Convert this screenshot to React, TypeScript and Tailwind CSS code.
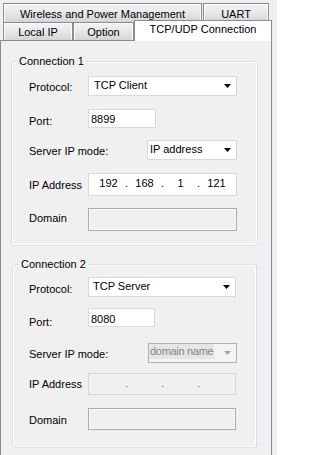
import React from 'react';

const Arrow: React.FC<{ disabled?: boolean }> = ({ disabled }) => (
  <span className="flex w-[17px] shrink-0 items-center justify-center">
    <svg width="7" height="4" viewBox="0 0 7 4">
      <path d="M0 0h7L3.5 4z" fill={disabled ? '#a6a6a6' : '#000'} />
    </svg>
  </span>
);

const Combo: React.FC<{ value: string; className: string }> = ({ value, className }) => (
  <div className={`flex h-full border border-[#d9d9d9] bg-white ${className}`}>
    <span className="flex-1 truncate pt-[2px]">{value}</span>
    <Arrow />
  </div>
);

const DisabledCombo: React.FC<{ value: string; className: string }> = ({ value, className }) => (
  <div className={`flex h-full border border-[#b1b1b1] bg-[#f3f3f3] ${className}`}>
    <div className="flex-1 overflow-hidden">
      <span className="inline-block h-[15px] whitespace-nowrap bg-[#e6e6e6] px-[1px] pt-[1px] tracking-[-0.3px] text-[#848484]">
        {value}
      </span>
    </div>
    <Arrow disabled />
  </div>
);

const TextBox: React.FC<{ value: string; className: string }> = ({ value, className }) => (
  <div className={`h-full border border-[#d9d9d9] bg-white pl-[2px] ${className}`}>{value}</div>
);

const IpBox: React.FC<{ parts?: string[]; className: string }> = ({ parts, className }) => {
  const fields = parts ?? ['', '', '', ''];
  return (
    <div
      className={`flex h-full border pl-[3px] pt-[3px] ${
        parts ? 'border-[#d9d9d9] bg-white text-black' : 'border-[#d6d6d6] bg-[#f0f0f0] text-[#6a6a6a]'
      } ${className}`}
    >
      {fields.map((p, i) => (
        <React.Fragment key={i}>
          <span className="w-[33px] text-center text-black">{p}</span>
          {i < 3 && <span className="w-[3px] text-center">.</span>}
        </React.Fragment>
      ))}
    </div>
  );
};

const DisabledBox: React.FC<{ className: string }> = ({ className }) => (
  <div className={`h-full border border-[#acacac] bg-[#f0f0f0] shadow-[inset_0_0_0_1px_#f9f9f9] ${className}`} />
);

const tabBase =
  'flex justify-center border-t border-l border-r border-[#898c95] bg-linear-to-b from-[#f3f3f3] via-[#e8e8e8] to-[#d4d4d4] shadow-[inset_1px_1px_0_#fbfbfb,inset_-1px_0_0_#fbfbfb]';

export default function App() {
  return (
    <div className="h-[455px] w-[277px] overflow-hidden bg-[#f0f0f0] pt-[3px] text-[11px] leading-[13px] text-black font-['Liberation_Sans',Arial,sans-serif]">
      {/* tab strip, back row */}
      <div className="flex h-[19px] pl-[3px]">
        <div className={`${tabBase} h-[19px] w-[199px] pt-[4px]`}>Wireless and Power Management</div>
        <div className={`${tabBase} ml-[1px] h-[19px] w-[66px] pt-[4px]`}>UART</div>
      </div>
      {/* tab strip, front row */}
      <div className="flex h-[18px] items-end pl-[3px]">
        <div className={`${tabBase} h-[18px] w-[70px] pt-[3px]`}>Local IP</div>
        <div className={`${tabBase} h-[18px] w-[61px] pt-[3px]`}>Option</div>
        <div className="relative z-10 -mb-[1px] flex h-[21px] w-[138px] justify-center border-t border-l border-r border-[#898c95] bg-white pt-[2px]">
          TCP/UDP Connection
        </div>
      </div>

      {/* panel */}
      <div className="h-[420px] w-[272px] border border-[#898c95] bg-[#f0f0f0]">
        <fieldset className="ml-[10px] mt-[14px] w-[247px] rounded-[3px] border border-[#d5dfe5] pb-[14px] shadow-[inset_0_0_0_1px_#fff]">
          <legend className="ml-[5px] bg-[#f0f0f0] px-[2px] leading-[13px]">Connection 1</legend>
          <div className="pl-[17px]">
            <div className="mt-[8px] flex h-[20px]">
              <span className="mt-[5px] w-[59px] shrink-0">Protocol:</span>
              <Combo value="TCP Client" className="w-[149px] pl-[5px]" />
            </div>
            <div className="mt-[13px] flex h-[19px]">
              <span className="mt-[6px] w-[59px] shrink-0">Port:</span>
              <TextBox value="8899" className="w-[68px] pt-[3px]" />
            </div>
            <div className="mt-[12px] flex h-[20px]">
              <span className="mt-[5px] w-[118px] shrink-0">Server IP mode:</span>
              <Combo value="IP address" className="w-[90px] pl-[2px]" />
            </div>
            <div className="mt-[13px] flex h-[23px]">
              <span className="mt-[6px] w-[59px] shrink-0">IP Address</span>
              <IpBox parts={['192', '168', '1', '121']} className="w-[149px]" />
            </div>
            <div className="mt-[12px] flex h-[23px]">
              <span className="mt-[4px] w-[59px] shrink-0">Domain</span>
              <DisabledBox className="w-[149px]" />
            </div>
          </div>
        </fieldset>

        <fieldset className="ml-[11px] mt-[12px] w-[245px] rounded-[3px] border border-[#d5dfe5] pb-[17px] shadow-[inset_0_0_0_1px_#fff]">
          <legend className="ml-[6px] bg-[#f0f0f0] px-[2px] leading-[13px]">Connection 2</legend>
          <div className="pl-[16px]">
            <div className="mt-[6px] flex h-[20px]">
              <span className="mt-[6px] w-[59px] shrink-0">Protocol:</span>
              <Combo value="TCP Server" className="w-[148px] pl-[4px]" />
            </div>
            <div className="mt-[11px] flex h-[19px]">
              <span className="mt-[8px] w-[59px] shrink-0">Port:</span>
              <TextBox value="8080" className="w-[67px] pt-[4px]" />
            </div>
            <div className="mt-[16px] flex h-[20px]">
              <span className="mt-[5px] w-[119px] shrink-0">Server IP mode:</span>
              <DisabledCombo value="domain name" className="w-[89px]" />
            </div>
            <div className="mt-[10px] flex h-[22px]">
              <span className="mt-[5px] w-[59px] shrink-0">IP Address</span>
              <IpBox className="w-[148px]" />
            </div>
            <div className="mt-[13px] flex h-[22px]">
              <span className="mt-[6px] w-[59px] shrink-0">Domain</span>
              <DisabledBox className="w-[148px]" />
            </div>
          </div>
        </fieldset>
      </div>
    </div>
  );
}
